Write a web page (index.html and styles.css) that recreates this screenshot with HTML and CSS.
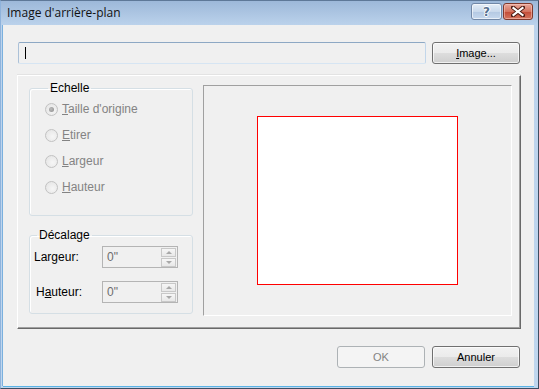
FILE: index.html
```html
<!DOCTYPE html>
<html lang="fr">
  <head>
    <meta charset="UTF-8" />
    <title>Image d'arrière-plan</title>
    <link rel="stylesheet" href="styles.css">
  </head>
  <body>
    <div class="window">
      <!-- Title bar -->
      <div class="titlebar">
        <span class="title">Image d'arrière-plan</span>
        <div class="caption-btns">
          <span class="cap-btn help">?</span>
          <span class="cap-btn close">
            <svg width="14" height="11" viewBox="0 0 14 11">
              <path d="M2 1.5 L12 9.5 M12 1.5 L2 9.5" stroke="#4a1a12" stroke-width="4" stroke-linecap="square" />
              <path d="M2.5 2 L11.5 9 M11.5 2 L2.5 9" stroke="#ffffff" stroke-width="2.2" stroke-linecap="square" />
            </svg>
          </span>
        </div>
      </div>

      <div class="client">
        <div class="file-row">
          <div class="path-box"><span class="caret"></span></div>
          <button class="btn"><u>I</u>mage...</button>
        </div>

        <div class="panel">
          <div class="left-col">
            <fieldset class="group scale">
              <legend>Echelle</legend>
              <div class="radio-row"><span class="radio on"></span><span><u>T</u>aille d'origine</span></div>
              <div class="radio-row"><span class="radio"></span><span><u>E</u>tirer</span></div>
              <div class="radio-row"><span class="radio"></span><span><u>L</u>argeur</span></div>
              <div class="radio-row"><span class="radio"></span><span><u>H</u>auteur</span></div>
            </fieldset>

            <fieldset class="group offset">
              <legend>Décalage</legend>
              <div class="field-row">
                <span class="field-label">Lar<u>g</u>eur:</span>
                <div class="spin">
                  <span class="spin-value">0"</span>
                  <div class="spin-btns">
                    <span class="spin-btn up"></span>
                    <span class="spin-btn down"></span>
                  </div>
                </div>
              </div>
              <div class="field-row second">
                <span class="field-label">H<u>a</u>uteur:</span>
                <div class="spin">
                  <span class="spin-value">0"</span>
                  <div class="spin-btns">
                    <span class="spin-btn up"></span>
                    <span class="spin-btn down"></span>
                  </div>
                </div>
              </div>
            </fieldset>
          </div>

          <div class="preview">
            <div class="page"></div>
          </div>
        </div>

        <div class="actions">
          <button class="btn" disabled>OK</button>
          <button class="btn">Annuler</button>
        </div>
      </div>
    </div>
  </body>
</html>
```

FILE: styles.css
```css
body {
  margin: 0;
  padding: 0;
  background-color: #ffffff;
  font-family: 'Liberation Sans', Arial, sans-serif;
  font-size: 11px;
  color: #000000;
}

/* Window frame */
.window {
  width: 539px;
  height: 389px;
  box-sizing: border-box;
  display: flex;
  flex-direction: column;
  background: linear-gradient(#9db8d9, #bcd3ec 25px, #bfd6ee);
  border-right: 1px solid #3d4e62;
  border-bottom: 1px solid #3d4e62;
  border-top: 1px solid #5e7898;
  border-left: 1px solid #8fb3dc;
}

.titlebar {
  height: 24px;
  display: flex;
  align-items: center;
  justify-content: space-between;
  padding-left: 6px;
}

.title {
  font-family: 'Open Sans', 'Noto Sans', sans-serif;
  font-size: 12px;
  color: #111111;
  padding-bottom: 2px;
}

.caption-btns {
  display: flex;
  gap: 1px;
  margin-right: 5px;
  margin-bottom: 3px;
}

.cap-btn {
  height: 17px;
  box-sizing: border-box;
  border-radius: 3px;
  display: flex;
  align-items: center;
  justify-content: center;
}

.cap-btn.help {
  width: 31px;
  border: 1px solid #7187a6;
  background: linear-gradient(#e4edf7, #c9d9ec 50%, #b3c8e2 51%, #c6d8ee);
  box-shadow: inset 0 0 0 1px rgba(255, 255, 255, 0.6);
  font-family: 'DejaVu Sans', sans-serif;
  font-weight: bold;
  font-size: 12px;
  color: #56708f;
  text-shadow: 1px 0 #fff, -1px 0 #fff, 0 1px #fff, 0 -1px #fff;
}

.cap-btn.close {
  width: 30px;
  border: 1px solid #80392d;
  background: linear-gradient(#e8a89c, #d4735f 50%, #c24a36 51%, #d4755f);
  box-shadow: inset 0 0 0 1px rgba(255, 210, 200, 0.5);
}

/* Client area */
.client {
  flex: 1;
  background-color: #f0f0f0;
  margin: 0 4px 2px 2px;
  padding: 17px 0 0 14px;
  display: flex;
  flex-direction: column;
  box-shadow: 0 1px 0 #5bb3e6, -1px 0 0 #7ab0de;
}

.file-row {
  display: flex;
  gap: 6px;
  margin-left: 1px;
  height: 22px;
}

.path-box {
  width: 408px;
  height: 22px;
  box-sizing: border-box;
  border: 1px solid;
  border-color: #8da8c4 #c2d6ea #d6e5f3 #abc1d8;
  border-radius: 2px;
  background-color: #f0f0f0;
  padding: 4px 0 0 6px;
}

.caret {
  display: block;
  width: 1px;
  height: 12px;
  background-color: #000000;
}

/* Buttons */
.btn {
  width: 88px;
  height: 22px;
  box-sizing: border-box;
  border: 1px solid #707070;
  border-radius: 3px;
  background: linear-gradient(#f2f2f2, #ebebeb 50%, #dddddd 51%, #cfcfcf);
  box-shadow: inset 0 0 0 1px rgba(255, 255, 255, 0.7);
  font-family: 'Liberation Sans', Arial, sans-serif;
  font-size: 11px;
  color: #000000;
  padding: 0;
}

.btn:disabled {
  border-color: #adb2b5;
  background: #f4f4f4;
  box-shadow: none;
  color: #838383;
}

/* Sunken panel */
.panel {
  margin-top: 11px;
  width: 504px;
  height: 254px;
  box-sizing: border-box;
  border-top: 1px solid #ffffff;
  border-left: 1px solid #ffffff;
  border-right: 1px solid #696969;
  border-bottom: 1px solid #696969;
  box-shadow: inset -1px -1px 0 #a0a0a0, 0 -1px 0 #e3e3e3;
  padding: 5px 0 0 11px;
  display: flex;
  align-items: flex-start;
  gap: 10px;
}

.left-col {
  width: 164px;
  display: flex;
  flex-direction: column;
  gap: 12px;
}

.group {
  margin: 0;
  border: 1px solid #d5dfe5;
  border-radius: 3px;
  box-shadow: inset 1px 1px 0 #ffffff;
  min-width: 0;
}

.group legend {
  padding: 0 2px;
  margin-left: 3px;
  line-height: 14px;
  font-size: 12px;
}

.scale {
  height: 135px;
  box-sizing: border-box;
  padding: 1px 0 0 15px;
}

.radio-row {
  height: 26px;
  display: flex;
  align-items: center;
  gap: 4px;
  color: #838383;
  font-size: 12px;
}

.radio {
  width: 13px;
  height: 13px;
  box-sizing: border-box;
  border-radius: 50%;
  border: 1px solid #c2c2c2;
  background: radial-gradient(circle at 60% 60%, #f6f6f6, #e2e2e2);
  display: flex;
  align-items: center;
  justify-content: center;
}

.radio.on::after {
  content: "";
  width: 5px;
  height: 5px;
  border-radius: 50%;
  background: radial-gradient(circle at 40% 40%, #bdbdbd, #8a8a8a);
}

.offset {
  height: 86px;
  box-sizing: border-box;
  padding: 4px 0 0 4px;
}

.field-row {
  display: flex;
  align-items: center;
  height: 22px;
}

.field-row.second {
  margin-top: 13px;
  padding-left: 2px;
}

.field-label {
  width: 68px;
  font-size: 12px;
}

.field-row.second .field-label {
  width: 66px;
}

.spin {
  width: 76px;
  height: 22px;
  box-sizing: border-box;
  border: 1px solid #b4b4b4;
  background-color: #f0f0f0;
  display: flex;
  justify-content: space-between;
  align-items: center;
  padding: 0 1px 0 4px;
}

.spin-value {
  font-size: 12px;
  color: #6d6d6d;
}

.spin-btns {
  display: flex;
  flex-direction: column;
  gap: 1px;
}

.spin-btn {
  width: 15px;
  height: 9px;
  box-sizing: border-box;
  border: 1px solid #c8c8c8;
  background: linear-gradient(#f6f6f6, #e8e8e8);
  display: flex;
  align-items: center;
  justify-content: center;
}

.spin-btn::after {
  content: "";
  border-left: 3px solid transparent;
  border-right: 3px solid transparent;
}

.spin-btn.up::after {
  border-bottom: 3px solid #a8a8a8;
}

.spin-btn.down::after {
  border-top: 3px solid #a8a8a8;
}

/* Preview area */
.preview {
  margin-top: 4px;
  width: 309px;
  height: 231px;
  box-sizing: border-box;
  border-top: 1px solid #a0a0a0;
  border-left: 1px solid #a0a0a0;
  border-right: 1px solid #ffffff;
  border-bottom: 1px solid #ffffff;
  display: flex;
  align-items: center;
  justify-content: center;
}

.page {
  width: 201px;
  height: 169px;
  box-sizing: border-box;
  border: 1px solid #ff0000;
  background-color: #ffffff;
}

.actions {
  margin-top: 17px;
  width: 504px;
  display: flex;
  justify-content: flex-end;
  gap: 7px;
  padding-right: 1px;
  box-sizing: border-box;
}
```
